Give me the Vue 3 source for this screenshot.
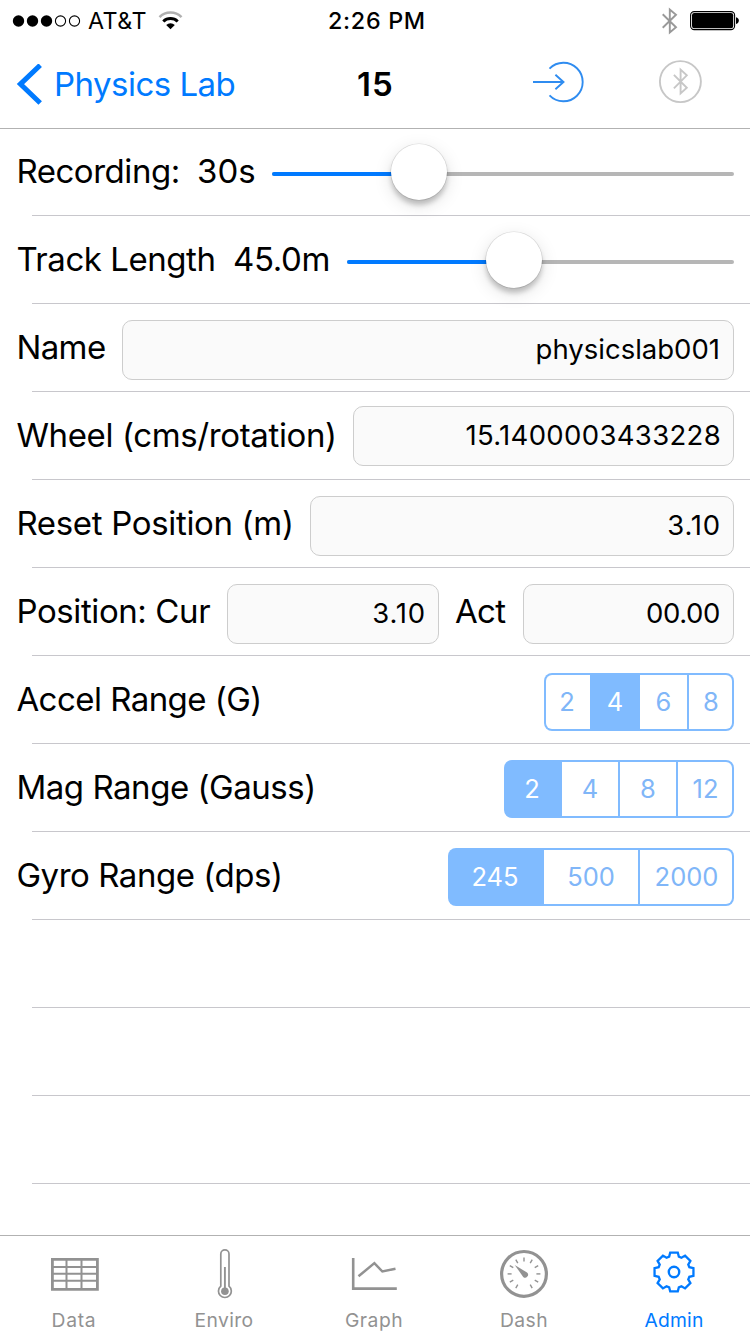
<script setup>
const sliders = [
  { id: 'rec', label: 'Recording:', value: '30s', fill: 147, thumb: 119 },
  { id: 'track-length', label: 'Track Length', value: '45.0m', fill: 167, thumb: 139 },
]
const fields = [
  { id: 'name', label: 'Name', value: 'physicslab001' },
  { id: 'wheel', label: 'Wheel (cms/rotation)', value: '15.1400003433228' },
  { id: 'reset', label: 'Reset Position (m)', value: '3.10' },
]
const ranges = [
  { id: 'accel', label: 'Accel Range (G)', options: ['2', '4', '6', '8'], selected: 1 },
  { id: 'mag', label: 'Mag Range (Gauss)', options: ['2', '4', '8', '12'], selected: 0 },
  { id: 'gyro', label: 'Gyro Range (dps)', options: ['245', '500', '2000'], selected: 0 },
]

// Eight-tooth gear outline centred on the origin.
const gear = (() => {
  const pts = []
  for (let i = 0; i < 8; i++) {
    for (const [offset, r] of [[-17.5, 16.1], [-11, 19.8], [11, 19.8], [17.5, 16.1]]) {
      const a = ((i * 45 + offset - 90) * Math.PI) / 180
      pts.push(`${(r * Math.cos(a)).toFixed(2)},${(r * Math.sin(a)).toFixed(2)}`)
    }
  }
  return pts.join(' ')
})()
const ticks = [-150, -120, -90, -60, -30, 0, 30, 60, 90, 120, 150]
</script>

<template>
  <div class="screen">
    <header class="header">
      <div class="status">
        <svg class="signal" width="70" height="14" viewBox="0 0 70 14">
          <circle cx="6.5" cy="7" r="5.7" />
          <circle cx="20.5" cy="7" r="5.7" />
          <circle cx="34.5" cy="7" r="5.7" />
          <circle class="off" cx="48.5" cy="7" r="5.1" />
          <circle class="off" cx="62.5" cy="7" r="5.1" />
        </svg>
        <span class="carrier">AT&amp;T</span>
        <svg class="wifi" width="26" height="20" viewBox="0 0 26 20">
          <path d="M1.5 6.1A15.6 15.6 0 0 1 23.5 6.1" stroke="#b0b0b0" stroke-width="2.6" fill="none" />
          <path d="M5.3 10.5A10.4 10.4 0 0 1 19.7 10.5" stroke="#000" stroke-width="3" fill="none" />
          <path d="M12.5 18.3L8.2 13.9A6.3 6.3 0 0 1 16.8 13.9Z" />
        </svg>
        <span class="time">2:26 PM</span>
        <svg class="bt" width="17" height="28" viewBox="0 0 17 28">
          <path d="M1.7 7.2L15 20.2L8.8 25.5V2.5L15 7.8L1.7 20.8" />
        </svg>
        <svg class="battery" width="50" height="20" viewBox="0 0 50 20">
          <rect x="0.6" y="0.6" width="44" height="18" rx="3.6" fill="#fff" stroke="#000" stroke-width="1.1" />
          <rect x="2" y="2" width="41.2" height="15.2" rx="2.2" />
          <path d="M46 6.3Q48.8 7 48.8 9.6Q48.8 12.3 46 13Z" />
        </svg>
      </div>
      <div class="nav">
        <svg class="chevron" width="26" height="42" viewBox="0 0 26 42">
          <path d="M24.2 1.2L4.4 20.1L24.2 39" />
        </svg>
        <span class="back">Physics Lab</span>
        <span class="title">15</span>
        <svg class="login" width="52" height="44" viewBox="0 0 52 44">
          <path d="M0 22H30.5M22.4 14.7L30.5 22L22.4 29.3M16.5 8.6A19.3 19.3 0 1 1 16.5 35.4" />
        </svg>
        <svg class="btround" width="44" height="44" viewBox="0 0 44 44">
          <circle cx="22.4" cy="21.6" r="20.5" />
          <path d="M15.9 14.9L28.8 27.8L22.6 33.4V9.6L28.8 15.4L15.9 28.4" />
        </svg>
      </div>
    </header>

    <main class="list">
      <section v-for="s in sliders" :key="s.id" class="row" :class="s.id">
        <span class="label">{{ s.label }}</span>
        <span class="reading">{{ s.value }}</span>
        <div class="slider">
          <div class="fill" :style="{ width: s.fill + 'px' }"></div>
          <div class="thumb" :style="{ left: s.thumb + 'px' }"></div>
        </div>
      </section>
      <section v-for="f in fields" :key="f.id" class="row" :class="f.id">
        <span class="label">{{ f.label }}</span>
        <div class="field"><span>{{ f.value }}</span></div>
      </section>
      <section class="row position">
        <span class="label">Position: Cur</span>
        <div class="field cur"><span>3.10</span></div>
        <span class="label act">Act</span>
        <div class="field actual"><span>00.00</span></div>
      </section>
      <section v-for="r in ranges" :key="r.id" class="row" :class="r.id">
        <span class="label">{{ r.label }}</span>
        <div class="segments">
          <div v-for="(o, i) in r.options" :key="o" class="segment" :class="{ on: i === r.selected }">{{ o }}</div>
        </div>
      </section>
      <section v-for="n in 3" :key="n" class="row"></section>
    </main>

    <footer class="tabs">
      <div class="tab">
        <svg width="54" height="54" viewBox="0 0 54 54">
          <path d="M5.4 12.4H50.4V42.4H5.4Z" stroke-width="2.8" />
          <path d="M19.5 12V42M34.5 12V42M5 19.9H50M5 26.8H50M5 33.7H50" stroke-width="2" />
        </svg>
        <span class="t-data">Data</span>
      </div>
      <div class="tab">
        <svg width="54" height="54" viewBox="0 0 54 54">
          <path d="M23.8 39.2V7A4 4 0 0 1 32 7V39.2A6.4 6.4 0 1 1 23.8 39.2Z" stroke-width="1.7" />
          <path d="M27.9 20V43" stroke-width="1.9" />
          <circle cx="27.9" cy="44.3" r="3.8" fill="currentColor" stroke="none" />
        </svg>
        <span class="t-enviro">Enviro</span>
      </div>
      <div class="tab">
        <svg width="54" height="54" viewBox="0 0 54 54">
          <path d="M6.2 11V41.6H49.8" stroke-width="2.6" />
          <path d="M11.5 29.3L27.4 16.1L35.4 24.5L48.5 21.7" stroke-width="2.5" />
        </svg>
        <span class="t-graph">Graph</span>
      </div>
      <div class="tab">
        <svg width="54" height="54" viewBox="0 0 54 54">
          <g transform="translate(27 26.9)">
            <circle r="22.4" stroke-width="3.2" />
            <path v-for="t in ticks" :key="t" d="M0 -16.4V-12.4" stroke-width="1.4" :transform="`rotate(${t})`" />
            <path d="M-9.3 -9L3 -1.4A2.7 2.7 0 0 1 -0.8 3Z" fill="currentColor" stroke="none" />
          </g>
        </svg>
        <span class="t-dash">Dash</span>
      </div>
      <div class="tab active">
        <svg width="54" height="54" viewBox="0 0 54 54">
          <g transform="translate(27 25)">
            <polygon :points="gear" stroke-width="2.3" />
            <circle r="5.2" stroke-width="2.4" />
          </g>
        </svg>
        <span class="t-admin">Admin</span>
      </div>
    </footer>
  </div>
</template>

<style>
body {
  margin: 0;
  background: #fff;
}
</style>

<style scoped>
.screen {
  width: 750px;
  height: 1334px;
  display: flex;
  flex-direction: column;
  overflow: hidden;
  background: #fff;
  color: #000;
  font-family: Inter, "Liberation Sans", sans-serif;
  white-space: nowrap;
}
svg {
  display: block;
  flex: none;
}
.header {
  box-sizing: border-box;
  height: 129px;
  flex: none;
  border-bottom: 1px solid #b2b2b2;
}
.status {
  height: 41px;
  display: grid;
  grid-template-columns: 12px 76px 70px 170px 333px 29px 60px;
  align-items: center;
  font-size: 23.3px;
  line-height: 41px;
}
.signal {
  grid-column: 2;
}
.signal .off {
  fill: none;
  stroke: #000;
  stroke-width: 1.1;
}
.carrier {
  letter-spacing: 0.5px;
}
.time {
  font-weight: 500;
  letter-spacing: 0.7px;
}
.bt path,
.btround {
  fill: none;
  stroke: #999;
  stroke-width: 1.9;
}
.nav {
  height: 87px;
  display: grid;
  grid-template-columns: 16px 38px 303px 176px 125px 60px;
  align-items: center;
  font-size: 33px;
  line-height: 87px;
}
.chevron {
  grid-column: 2;
  fill: none;
  stroke: #007aff;
  stroke-width: 5;
}
.back {
  color: #007aff;
  letter-spacing: -0.52px;
}
.title {
  font-weight: 600;
  letter-spacing: 1px;
}
.login {
  fill: none;
  stroke: #2f8cf0;
  stroke-width: 1.9;
  margin-bottom: 5px;
}
.btround {
  stroke: #c7c7c7;
  margin-bottom: 5px;
}
.list {
  flex: 1;
  min-height: 0;
  margin-top: -1px;
}
.row {
  box-sizing: border-box;
  height: 88px;
  display: flex;
  padding: 0 16px;
  background: linear-gradient(#c8c7cc, #c8c7cc) 32px 87px / 718px 1px no-repeat;
}
.label,
.reading {
  flex: none;
  font-size: 33px;
  line-height: 87px;
  letter-spacing: -0.46px;
}
.row > .label:first-child {
  box-sizing: border-box;
  padding-left: 0.4px;
}
.rec .label { width: 181px; }
.rec .reading { width: 75px; letter-spacing: 0; }
.track-length .label { width: 217px; }
.track-length .reading { width: 114px; letter-spacing: -0.4px; }
.name .label { width: 106px; letter-spacing: -0.6px; }
.wheel .label { width: 337px; letter-spacing: -0.37px; }
.reset .label { width: 294px; letter-spacing: -0.33px; }
.position .label { width: 211px; letter-spacing: -0.4px; }
.position .act { width: 68px; margin-left: 16px; letter-spacing: -0.7px; }
.accel .label { letter-spacing: -0.54px; }

.slider {
  position: relative;
  flex: 1;
  height: 4px;
  margin-top: 44px;
  border-radius: 2px;
  background: #b6b6b6;
}
.fill {
  height: 4px;
  border-radius: 2px;
  background: #007aff;
}
.thumb {
  position: absolute;
  top: -28px;
  width: 56px;
  height: 56px;
  border-radius: 50%;
  background: #fff;
  box-shadow: 0 0 0 0.6px rgba(0, 0, 0, 0.12), 0 5px 5px rgba(0, 0, 0, 0.2), 0 5px 18px rgba(0, 0, 0, 0.13);
}
.field {
  box-sizing: border-box;
  flex: 1;
  height: 60px;
  margin-top: 16px;
  padding-right: 13px;
  border: 1px solid #cdcdcd;
  border-radius: 10px;
  background: #fafafa;
  text-align: right;
  font-size: 27.5px;
  line-height: 57px;
}
.wheel .field {
  margin-top: 14px;
  padding-right: 12px;
  letter-spacing: 0.33px;
}
.reset .field,
.position .cur {
  padding-right: 12px;
  letter-spacing: 0.8px;
}
.cur {
  flex: none;
  width: 212px;
}
.actual {
  letter-spacing: -0.4px;
}
.segments {
  box-sizing: border-box;
  height: 58px;
  margin: 16px 0 0 auto;
  display: grid;
  padding: 2px;
  border-radius: 8px;
  background: #80bbff;
  color: #80b6f8;
  font-size: 25.5px;
  line-height: 54px;
  text-align: center;
}
.segment {
  border-left: 2px solid #80bbff;
  background: #fff;
}
.segment:first-child {
  border-left: 0;
  padding-right: 2px;
  border-radius: 6px 0 0 6px;
}
.segment:last-child {
  padding-left: 1px;
  border-radius: 0 6px 6px 0;
}
.segment.on {
  background: #80bbff;
  color: #fff;
}
.accel .segments { grid-template-columns: 44px 48px 49px 45px; margin-top: 17px; }
.mag .segments { grid-template-columns: 54px 58px 58px 56px; }
.gyro .segments { grid-template-columns: 92px 96px 94px; }

.tabs {
  box-sizing: border-box;
  flex: none;
  height: 99px;
  display: flex;
  padding-top: 11px;
  border-top: 1px solid #b2b2b2;
  background: #fff;
  color: #929292;
  font-size: 19.3px;
}
.tabs svg {
  fill: none;
  stroke: currentColor;
}
.tab {
  width: 150px;
  display: flex;
  flex-direction: column;
  align-items: center;
  line-height: 38px;
  margin-left: -1px;
  margin-right: 1px;
}
.t-data { letter-spacing: 0.7px; }
.t-enviro { letter-spacing: 0.4px; }
.t-graph { letter-spacing: 0.5px; }
.t-dash { letter-spacing: 0.4px; }
.t-admin { letter-spacing: 0.2px; }
.active {
  color: #007aff;
}
</style>
